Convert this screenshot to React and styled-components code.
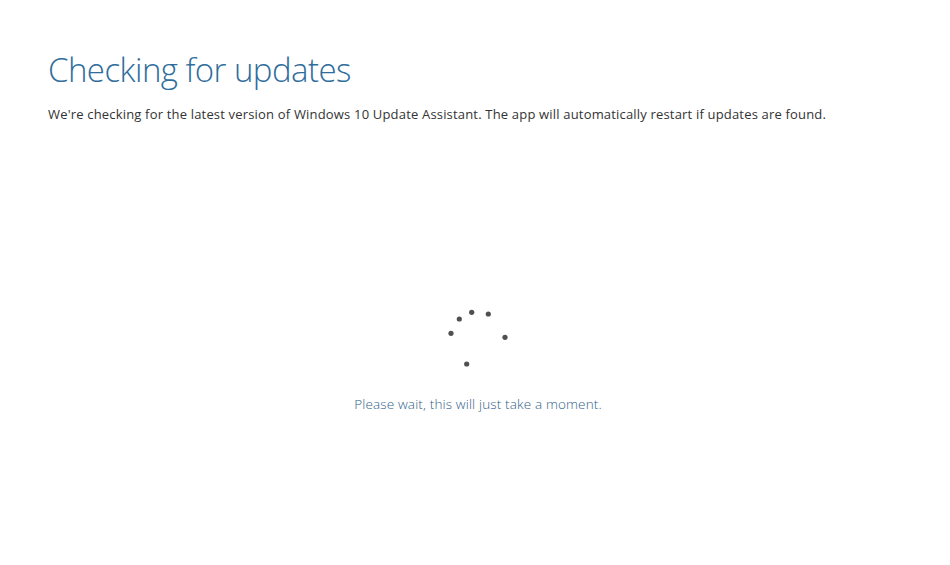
import React from 'react'
import styled, { createGlobalStyle } from 'styled-components'

const GlobalStyle = createGlobalStyle`
  html, body {
    margin: 0;
    padding: 0;
    background: #ffffff;
  }
  body {
    font-family: "Open Sans", "Noto Sans", sans-serif;
  }
`

const DOTS = [
  [471.7, 312.3],
  [488.3, 314],
  [459.3, 319],
  [451, 333.3],
  [505, 337.3],
  [466.7, 364],
]

const App = () => {
  return (
    <Page>
      <GlobalStyle />
      <Header>
        <Title>Checking for updates</Title>
        <Lead>
          We're checking for the latest version of Windows 10 Update Assistant. The app will
          automatically restart if updates are found.
        </Lead>
      </Header>
      <Progress>
        <Spinner width="70" height="70" viewBox="443 304 70 70">
          {DOTS.map(([x, y], i) => (
            <circle key={i} cx={x} cy={y} r="2.6" fill="#505050" />
          ))}
        </Spinner>
        <Wait>Please wait, this will just take a moment.</Wait>
      </Progress>
    </Page>
  )
}

export default App

const Page = styled.div`
  width: 950px;
  height: 565px;
  box-sizing: border-box;
  padding: 48px 0 0 48px;
  display: flex;
  flex-direction: column;
`

const Header = styled.div`
  display: flex;
  flex-direction: column;
`

const Title = styled.h1`
  margin: 0;
  font-size: 33px;
  font-weight: 300;
  color: #2f6d9c;
  line-height: 44px;
  letter-spacing: -0.55px;
`

const Lead = styled.p`
  margin: 13px 0 0;
  font-size: 13px;
  color: #333333;
  line-height: 18px;
  letter-spacing: 0.18px;
  white-space: nowrap;
`

const Progress = styled.div`
  display: flex;
  flex-direction: column;
  align-items: center;
  margin-top: 181px;
  width: 860px;
`

const Spinner = styled.svg`
  display: block;
`

const Wait = styled.div`
  margin-top: 21px;
  font-size: 13.5px;
  font-weight: 300;
  color: #2f6288;
  line-height: 18px;
  letter-spacing: 0.15px;
`
